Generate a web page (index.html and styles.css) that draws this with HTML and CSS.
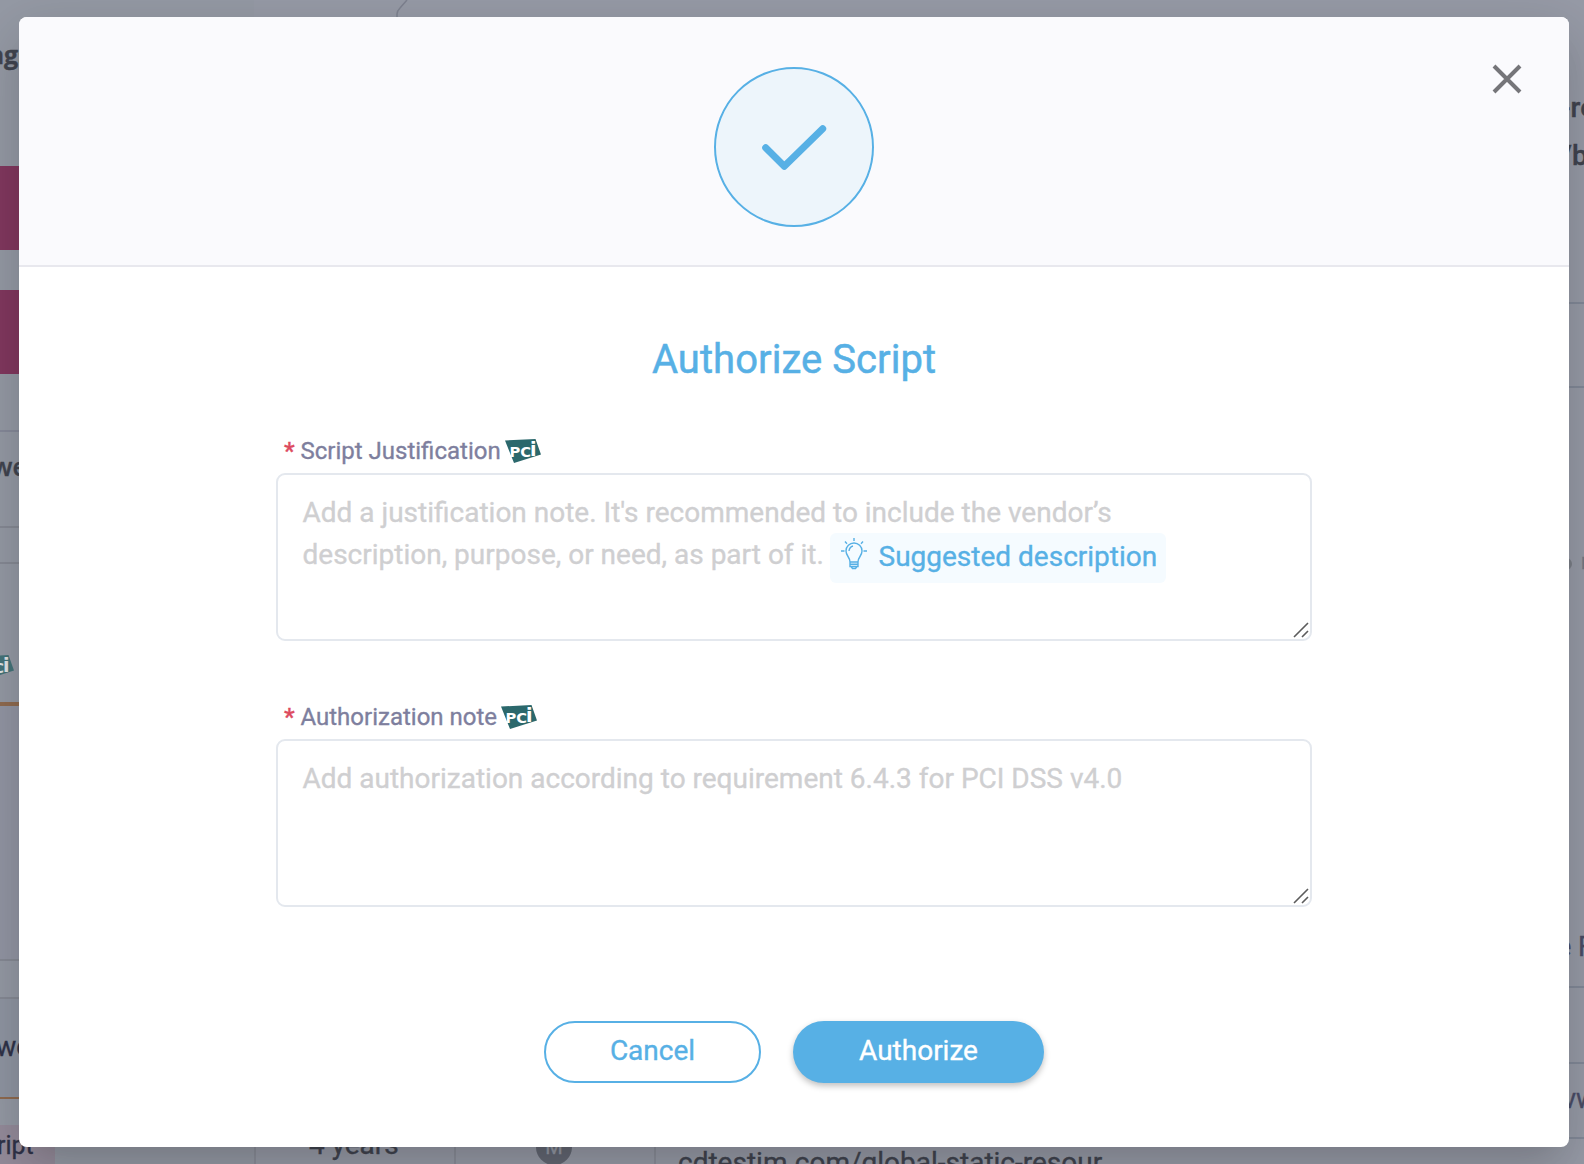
FILE: index.html
```html
<!DOCTYPE html>
<html lang="en">
<head>
    <meta charset="UTF-8">
    <meta name="viewport" content="width=device-width, initial-scale=1.0">
    <title>Authorize Script</title>
    <link rel="stylesheet" href="styles.css">
</head>
<body>
    <svg class="defs" width="0" height="0">
        <symbol id="pci" viewBox="0 0 36 24">
            <path d="M0 1.500L30.500 0L36 15.500L9 24Z" fill="#2b686c"/>
            <g class="pci-text">
                <text x="4.500" y="17.500" font-size="14" textLength="21.500" lengthAdjust="spacingAndGlyphs">PC</text>
                <text x="25" y="17" font-size="19">i</text>
            </g>
        </symbol>
    </svg>

    <div class="page">
        <div class="side-left">
            <div class="tags">ags</div>
            <div class="bar"></div>
            <div class="bar"></div>
            <div class="row row-name">we</div>
            <div class="row row-pci"><svg class="pci" width="36" height="24"><use href="#pci"/></svg></div>
            <div class="row row-blank"></div>
            <div class="row row-site">we</div>
            <div class="row row-script"><span>ript</span></div>
        </div>
        <div class="table">
            <div class="top-line">
                <svg width="14" height="17" viewBox="0 0 14 17"><path d="M1 17V14Q1 11 4 8L11 0" fill="none" stroke="#7e8290" stroke-width="1.500"/></svg>
            </div>
            <div class="table-row">
                <div class="cell cell-age">4 years</div>
                <div class="cell cell-user"><span class="avatar">M</span></div>
                <div class="cell cell-url">cdtestim.com/global-static-resour</div>
            </div>
        </div>
        <div class="side-right">
            <div class="r-title">-re<br>/bu</div>
            <div class="r-row"></div>
            <div class="r-row r-count"><i></i>r</div>
            <div class="r-row r-from">e F</div>
            <div class="r-row r-empty"></div>
            <div class="r-row r-www">vw</div>
            <div class="r-row"></div>
        </div>
    </div>

    <div class="modal">
        <div class="modal-header">
            <div class="check">
                <svg width="156" height="156" viewBox="0 0 156 156"><path d="M49.700 78.800L68.300 97.300L106.700 59.700" fill="none" stroke="#57b0e5" stroke-width="7" stroke-linecap="round" stroke-linejoin="round"/></svg>
            </div>
            <button class="close">
                <svg width="30" height="30" viewBox="0 0 30 30"><path d="M2 2L28 28M28 2L2 28" stroke="#757579" stroke-width="4"/></svg>
            </button>
        </div>

        <div class="modal-body">
            <h1>Authorize Script</h1>

            <label for="justification"><b>*</b><span>Script Justification</span><svg class="pci" width="36" height="24"><use href="#pci"/></svg></label>
            <div class="field">
                <textarea id="justification" placeholder="Add a justification note. It's recommended to include the vendor’s
description, purpose, or need, as part of it."></textarea>
                <button class="suggest">
                    <svg width="28" height="34" viewBox="0 0 28 34" fill="none" stroke="#57b0e5" stroke-width="1.400">
                        <path d="M10 24c0-5-4-6-4-11a8 8 0 0 1 16 0c0 5-4 6-4 11zM10 24v4.500h8V24M10 26.300h8M11 28.500l1.500 2h3l1.500-2M9 13q.5-4 4-5"/>
                        <path d="M14 0v3M5 3.500l2 2.300M23 3.500l-2 2.300M1 13h3.500M23.500 13H27"/>
                    </svg>
                    <span>Suggested description</span>
                </button>
                <svg class="grip" width="16" height="16" viewBox="0 0 16 16"><path d="M1 15L15 1M9 15L15 9" stroke="#5c5c5c" stroke-width="1.600"/></svg>
            </div>

            <label for="note"><b>*</b><span>Authorization note</span><svg class="pci" width="36" height="24"><use href="#pci"/></svg></label>
            <div class="field">
                <textarea id="note" placeholder="Add authorization according to requirement 6.4.3 for PCI DSS v4.0"></textarea>
                <svg class="grip" width="16" height="16" viewBox="0 0 16 16"><path d="M1 15L15 1M9 15L15 9" stroke="#5c5c5c" stroke-width="1.600"/></svg>
            </div>

            <div class="actions">
                <button class="btn btn-cancel">Cancel</button>
                <button class="btn btn-authorize">Authorize</button>
            </div>
        </div>
    </div>
</body>
</html>
```
FILE: styles.css
```css
* {
    box-sizing: border-box;
}

body {
    margin: 0;
    width: 1584px;
    height: 1164px;
    overflow: hidden;
    font-family: Roboto, "Liberation Sans", sans-serif;
    background: #979ba7;
    -webkit-text-stroke: 0.35px;
}

button {
    font-family: inherit;
    cursor: pointer;
    -webkit-text-stroke: inherit;
}

.defs {
    position: absolute;
}

.pci-text {
    fill: #fff;
    font-family: "DejaVu Sans", sans-serif;
    font-weight: bold;
    -webkit-text-stroke: 0;
}

/* Page behind the dialog */
.page {
    display: flex;
    width: 1584px;
    height: 1164px;
    overflow: hidden;
    color: #41444f;
}

.side-left {
    width: 254px;
    flex: none;
    background: #959aa5;
    overflow: hidden;
}

.tags {
    height: 166px;
    padding-top: 37px;
    margin-left: -11px;
    font: 700 25px/34px "Open Sans", sans-serif;
}

.bar {
    height: 84px;
    margin-bottom: 40px;
    background: #82385f;
}

.row-name {
    height: 98px;
    margin-top: 56px;
    border-top: 2px solid #868a9a;
    border-bottom: 2px solid #868a95;
    padding: 17px 0;
    text-indent: -8px;
    font: 600 25px/34px "Open Sans", sans-serif;
}

.row-pci {
    height: 144px;
    margin-top: 34px;
    border-top: 2px solid #868a95;
    border-bottom: 4px solid #906b50;
    padding-top: 91px;
}

.row-pci .pci {
    display: block;
    margin-left: -22px;
    opacity: 0.75;
}

.row-blank {
    height: 255px;
    border-bottom: 2px solid #868a95;
    background: #9396a4;
}

.row-site {
    height: 102px;
    margin-top: 36px;
    border-top: 2px solid #868a95;
    border-bottom: 2px solid #906b50;
    padding-top: 31px;
    text-indent: -4px;
    font-size: 27px;
    line-height: 34px;
    background: #9096a3;
    color: #303349;
}

.row-script {
    padding-top: 26px;
}

.row-script span {
    display: block;
    width: 55px;
    height: 40px;
    padding-top: 4px;
    background: #958c9b;
    color: #303349;
    font-size: 25px;
    line-height: 34px;
    text-indent: -3px;
}

.table {
    flex: 1;
    display: flex;
    flex-direction: column;
    justify-content: space-between;
    overflow: hidden;
}

.top-line {
    padding-left: 142px;
    height: 17px;
}

.table-row {
    display: flex;
    height: 40px;
}

.cell {
    border-left: 2px solid #8b8e9a;
    font-size: 28px;
    line-height: 42px;
    white-space: nowrap;
}

.cell-age {
    width: 200px;
    padding-left: 53px;
}

.cell-user {
    width: 200px;
    padding: 5px 0 0 80px;
}

.avatar {
    display: block;
    width: 36px;
    height: 36px;
    border-radius: 50%;
    background: #646874;
    color: #959aa5;
    font-size: 20px;
    line-height: 36px;
    text-align: center;
}

.cell-url {
    padding: 18px 0 0 22px;
}

.side-right {
    width: 16px;
    flex: none;
    overflow: hidden;
    white-space: nowrap;
}

.r-title {
    height: 302px;
    padding-top: 84px;
    margin-left: -7px;
    font-size: 28px;
    line-height: 48px;
    font-weight: 500;
}

.r-row {
    border-top: 2px solid #828998;
    height: 84px;
}

.r-count {
    display: flex;
    height: 600px;
    gap: 9px;
    padding-top: 162px;
    color: #747985;
    font-size: 22px;
    line-height: 24px;
}

.r-count i {
    flex: none;
    width: 12px;
    height: 12px;
    margin: 8px 0 0 -8px;
    border-radius: 50%;
    background: #7a7e87;
}

.r-from {
    height: 76px;
    margin-top: -76px;
    padding-top: 17px;
    border-color: transparent;
    text-indent: -11px;
    font-size: 27px;
    line-height: 36px;
    color: #4a4d67;
}

.r-empty {
    height: 76px;
}

.r-www {
    height: 75px;
    padding-top: 17px;
    text-indent: -5px;
    font-size: 27px;
    line-height: 36px;
    color: #4a4d67;
}

/* Dialog */
.modal {
    position: absolute;
    top: 17px;
    left: 19px;
    width: 1550px;
    height: 1130px;
    border-radius: 8px;
    background: #fff;
    overflow: hidden;
    box-shadow: 0 22px 30px -14px rgba(0, 0, 0, 0.1), 0 18px 60px 8px rgba(0, 0, 0, 0.14);
}

.modal-header {
    height: 250px;
    display: flex;
    justify-content: center;
    padding-top: 50px;
    background: #fafafd;
    border-bottom: 2px solid #e8e8ee;
}

.check {
    width: 160px;
    height: 160px;
    border: 2px solid #57b0e5;
    border-radius: 50%;
    background: #edf5fb;
}

.close {
    position: absolute;
    top: 47px;
    right: 47px;
    width: 30px;
    height: 30px;
    padding: 0;
    border: none;
    background: none;
}

.modal-body {
    width: 1036px;
    margin: 0 auto;
}

h1 {
    margin: 69px 0 0;
    font-size: 40px;
    line-height: 48px;
    font-weight: 400;
    letter-spacing: 0.05px;
    text-align: center;
    color: #57b0e5;
    -webkit-text-stroke: 0.5px;
}

label {
    display: flex;
    align-items: center;
    height: 36px;
    margin-top: 50px;
    padding-left: 8px;
    padding-bottom: 2px;
    font-size: 24px;
    color: #7e7f9e;
}

label b {
    width: 16.5px;
    font-weight: 500;
    color: #dd4b5e;
}

label .pci {
    margin-left: 4px;
}

.field {
    position: relative;
    height: 168px;
    margin: 3px 0 59px;
}

textarea {
    display: block;
    width: 100%;
    height: 168px;
    padding: 17px 24px 15px 24.5px;
    border: 2px solid #e4e8ee;
    border-radius: 9px;
    resize: none;
    font-family: inherit;
    font-size: 28px;
    line-height: 42px;
    overflow: hidden;
    -webkit-text-stroke: inherit;
}

textarea::placeholder {
    color: #cfcfd1;
}

.field + label {
    margin-top: 0;
}

.suggest {
    position: absolute;
    left: 554px;
    top: 60px;
    display: flex;
    align-items: flex-start;
    width: 336px;
    height: 50px;
    padding: 5px 0 0 10px;
    border: none;
    border-radius: 6px;
    background: #f5fbff;
    color: #57b0e5;
    font-size: 28px;
    line-height: 38px;
    white-space: nowrap;
}

.suggest span {
    margin-left: 10.5px;
}

.grip {
    position: absolute;
    right: 3px;
    bottom: 3px;
}

.actions {
    display: flex;
    gap: 32px;
    margin-top: 114px;
    padding-left: 268px;
}

.btn {
    height: 62px;
    padding: 0 0 4px;
    border-radius: 31px;
    font-size: 28px;
}

.btn-cancel {
    width: 217px;
    border: 2px solid #57b0e5;
    background: #fff;
    color: #57b0e5;
}

.btn-authorize {
    width: 251px;
    border: none;
    background: #57b0e5;
    color: #fff;
    box-shadow: 0 3px 6px rgba(0, 0, 0, 0.25);
}
```
